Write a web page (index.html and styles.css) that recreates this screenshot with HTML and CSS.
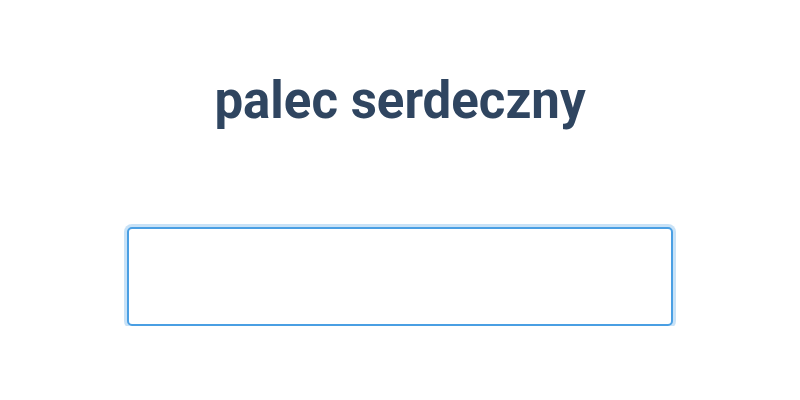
FILE: index.html
```html
<!DOCTYPE html>
<html lang="pl">
<head>
  <meta charset="UTF-8" />
  <title>Palec</title>
  <link rel="stylesheet" href="styles.css">
</head>
<body>
  <div class="card">
    <h1 class="word">palec serdeczny</h1>
    <input type="text" class="answer" autofocus>
  </div>
</body>
</html>
```

FILE: styles.css
```css
body {
  margin: 0;
  background-color: #fff;
  font-family: 'Roboto', sans-serif;
}

.card {
  display: flex;
  flex-direction: column;
  align-items: center;
  padding-top: 71px;
}

.word {
  margin: 0;
  font-size: 51px;
  font-weight: 700;
  line-height: 60px;
  color: #2f4560;
}

.answer {
  box-sizing: border-box;
  width: 546px;
  height: 99px;
  margin-top: 96px;
  border: 2px solid #4a9fe3;
  border-radius: 5px;
  outline: none;
  box-shadow: 0 0 0 3px rgba(74, 159, 227, 0.3);
  font-size: 24px;
  padding: 0 16px;
  font-family: 'Roboto', sans-serif;
}
```
